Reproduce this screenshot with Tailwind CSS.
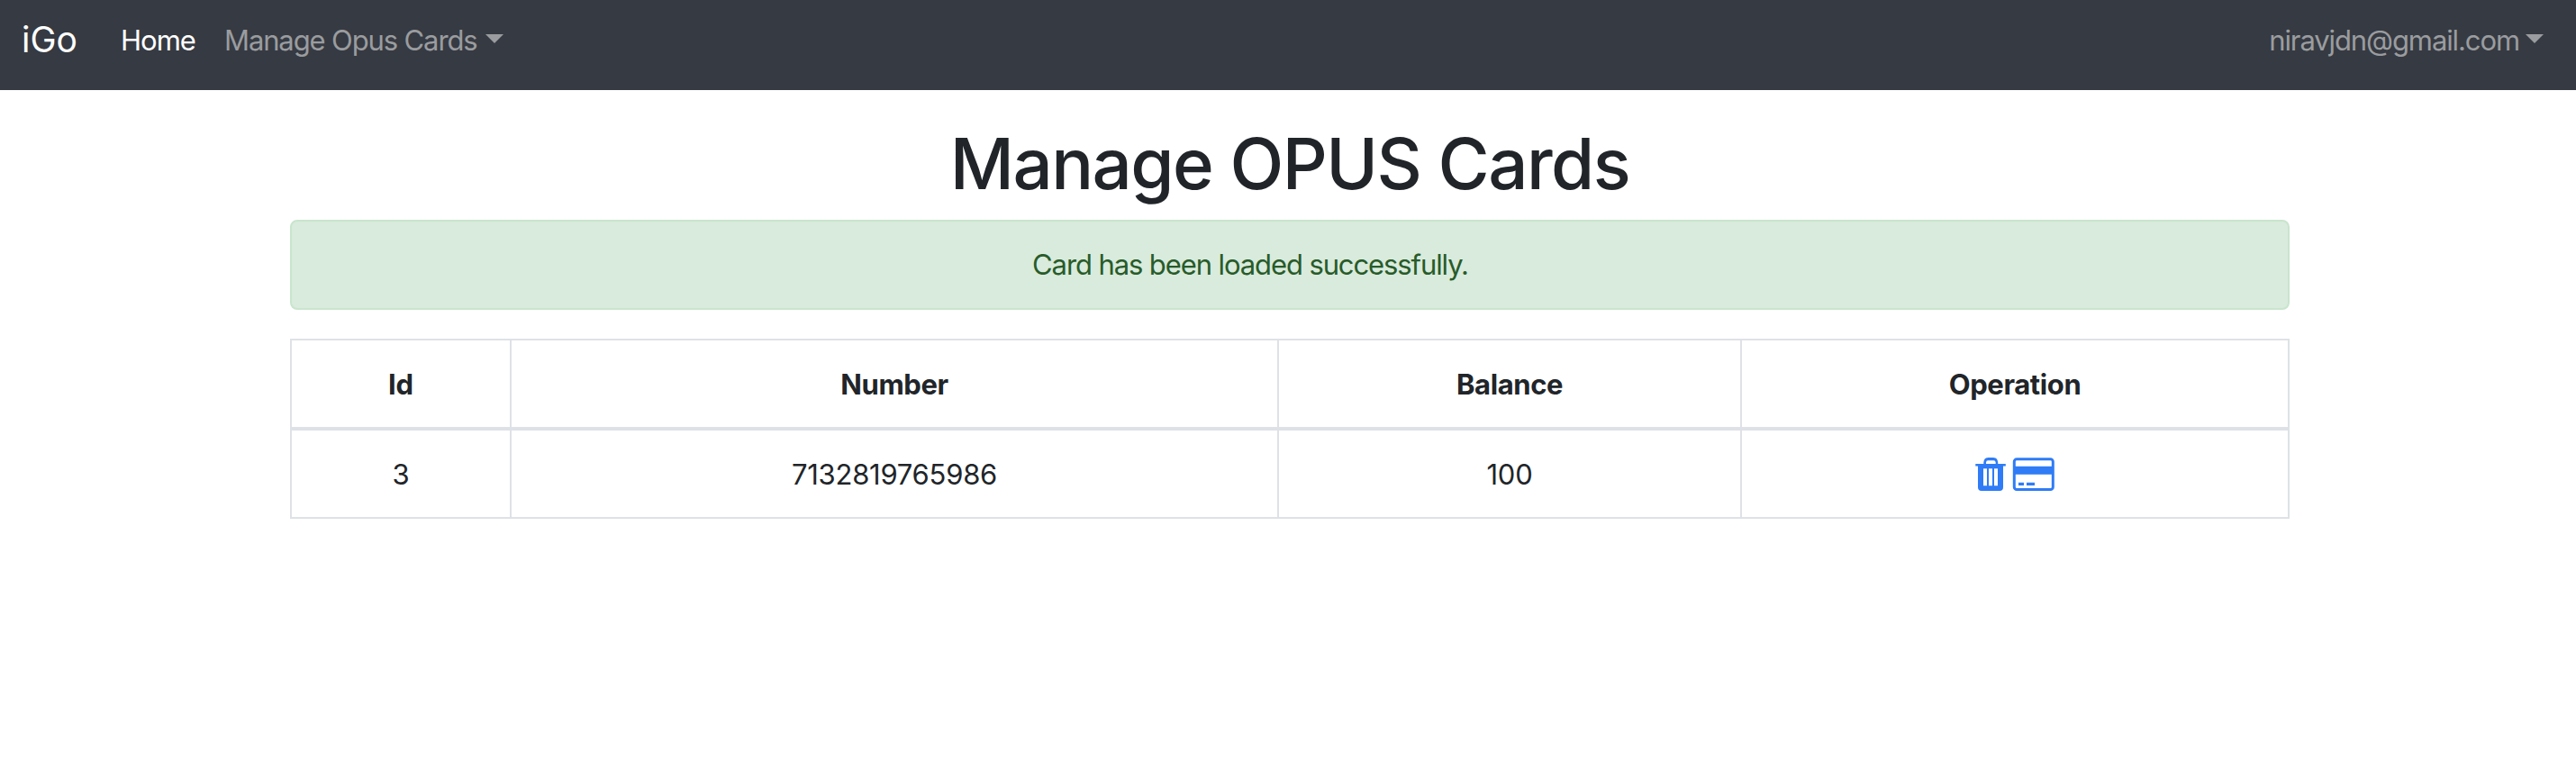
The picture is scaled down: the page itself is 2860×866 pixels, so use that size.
<!DOCTYPE html>
<html lang="en">
<head>
<meta charset="utf-8">
<title>iGo</title>
<script src="https://cdn.jsdelivr.net/npm/@tailwindcss/browser@4"></script>
</head>
<body class="bg-white font-['Inter','Liberation_Sans',sans-serif] text-[31px] leading-[48px] text-[#212529]">
  <nav class="flex h-[100px] items-start bg-[#363a42] pl-6 pr-9 pt-[21px] text-[#9a9c9f]">
    <a class="-mt-px w-[110px] text-[39px] text-white">iGo</a>
    <a class="w-[115px] tracking-[-1px] text-white">Home</a>
    <a class="flex items-start whitespace-nowrap tracking-[-1.12px]">Manage Opus Cards
      <svg class="ml-[9px] mt-[17px] h-[10px] w-5" viewBox="0 0 20 10" fill="currentColor"><path d="M0 0H20L10 10Z"/></svg>
    </a>
    <a class="ml-auto flex items-start whitespace-nowrap tracking-[-1.1px]">niravjdn@gmail.com
      <svg class="ml-[7px] mt-[17px] h-[10px] w-5" viewBox="0 0 20 10" fill="currentColor"><path d="M0 0H20L10 10Z"/></svg>
    </a>
  </nav>
  <main class="ml-[322px] w-[2220px] pt-[34px] text-center">
    <h1 class="mb-[14px] text-[78px] font-medium leading-[96px] tracking-[-1.55px]">Manage OPUS Cards</h1>
    <div class="mb-8 flex h-[100px] items-center justify-center rounded-lg border-2 border-[#c9e5cd] bg-[#d9ebdc] pl-10 pr-32 tracking-[-1.1px] text-[#285b2a]">Card has been loaded successfully.</div>
    <div class="flex flex-col gap-1 bg-[#dee2e6] p-[2px]">
      <div class="grid h-24 grid-cols-[242px_850px_512px_606px] gap-[2px] font-bold tracking-[-0.4px]">
        <div class="flex items-center justify-center bg-white pt-px tracking-normal">Id</div>
        <div class="flex items-center justify-center bg-white pt-px">Number</div>
        <div class="flex items-center justify-center bg-white pt-px">Balance</div>
        <div class="flex items-center justify-center bg-white pt-px">Operation</div>
      </div>
      <div class="grid h-24 grid-cols-[242px_850px_512px_606px] gap-[2px] tracking-[-0.25px]">
        <div class="flex items-center justify-center bg-white pt-px">3</div>
        <div class="flex items-center justify-center bg-white pt-px">7132819765986</div>
        <div class="flex items-center justify-center bg-white pt-px">100</div>
        <div class="flex items-center justify-center gap-[7px] bg-white text-[#2f7cf6]">
          <svg class="h-[38px] w-[34px]" viewBox="0 0 34 38" fill="currentColor">
            <path d="M9.3 8V6.2Q9.8 1 14.5 1H20Q24.7 1 25.2 6.2V8H33.8V10.4H31V34Q31 38 27 38H7Q3 38 3 34V10.4H.3V8ZM12 8H22.7V6.5Q22.5 4.3 20.5 4.3H14Q12.2 4.3 12 6.5ZM9 13.2V32.2H13V13.2ZM15 13.2V32.2H19V13.2ZM21 13.2V32.2H25V13.2Z" fill-rule="evenodd"/>
          </svg>
          <svg class="h-[38px] w-[47px]" viewBox="0 0 47 38" fill="currentColor">
            <rect x="2.3" y="2.8" width="43" height="33.7" rx="2.8" fill="none" stroke="currentColor" stroke-width="3"/>
            <path d="M2 10.7H45V19.7H2ZM7 28.8H13V32H7ZM16 28.8H25V32H16Z"/>
          </svg>
        </div>
      </div>
    </div>
  </main>
</body>
</html>
